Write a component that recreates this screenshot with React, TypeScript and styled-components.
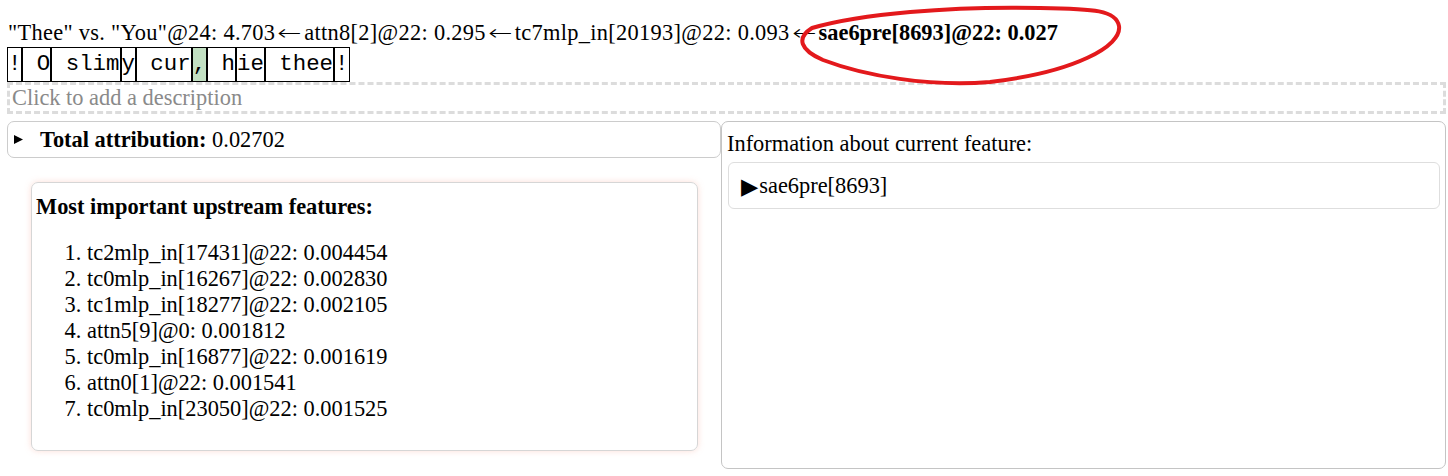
import * as React from 'react'
import styled, { createGlobalStyle } from 'styled-components'

const GlobalStyle = createGlobalStyle`
  html, body {
    margin: 0;
    padding: 0;
    background: #fff;
  }
  body {
    font-family: 'Liberation Serif', 'Times New Roman', serif;
    font-size: 22.4px;
    color: #000;
  }
`

const tokens = [
  { text: '!' },
  { text: ' O' },
  { text: ' slim' },
  { text: 'y' },
  { text: ' cur' },
  { text: ',', active: true },
  { text: ' h' },
  { text: 'ie' },
  { text: ' thee' },
  { text: '!' },
]

const upstream = [
  'tc2mlp_in[17431]@22: 0.004454',
  'tc0mlp_in[16267]@22: 0.002830',
  'tc1mlp_in[18277]@22: 0.002105',
  'attn5[9]@0: 0.001812',
  'tc0mlp_in[16877]@22: 0.001619',
  'attn0[1]@22: 0.001541',
  'tc0mlp_in[23050]@22: 0.001525',
]

export default function App() {
  return (
    <>
      <GlobalStyle />
      <Page>
        <Header>
          "Thee" vs. "You"@24: 4.703<LeftArrow>←</LeftArrow>attn8[2]@22: 0.295
          <LeftArrow>←</LeftArrow>tc7mlp_in[20193]@22: 0.093<LeftArrow>←</LeftArrow>
          <b>sae6pre[8693]@22: 0.027</b>
        </Header>
        <Tokens>
          {tokens.map((t, i) => (
            <Token key={i} active={t.active}>
              {t.text}
            </Token>
          ))}
        </Tokens>
        <Description>Click to add a description</Description>
        <Columns>
          <LeftCol>
            <TotalBox>
              <Marker viewBox="0 0 9 9">
                <polygon points="0,0 9,4.5 0,9" fill="#000" />
              </Marker>
              <span>
                <b>Total attribution:</b> 0.02702
              </span>
            </TotalBox>
            <Card>
              <CardTitle>Most important upstream features:</CardTitle>
              <List>
                {upstream.map(u => (
                  <li key={u}>{u}</li>
                ))}
              </List>
            </Card>
          </LeftCol>
          <RightPanel>
            <PanelTitle>Information about current feature:</PanelTitle>
            <FeatureBox>
              <Arrow>▶</Arrow>sae6pre[8693]
            </FeatureBox>
          </RightPanel>
        </Columns>
        <Annotation viewBox="0 0 1448 100">
          <path
            d="M 812 28 C 860 14, 950 6, 1040 8 C 1095 9, 1116 10, 1119 26 C 1122 46, 1075 72, 990 82 C 930 87, 865 76, 823 60 C 800 50, 796 38, 812 28"
            fill="none"
            stroke="#e3191c"
            strokeWidth="4"
            strokeLinecap="round"
          />
        </Annotation>
      </Page>
    </>
  )
}

const Page = styled.div`
  position: relative;
  width: 1439px;
  padding: 20px 2px 0 7px;
`

const Header = styled.div`
  line-height: 26px;
  padding-left: 1px;
  white-space: nowrap;
  letter-spacing: 0.3px;
  b {
    letter-spacing: 0;
  }
`

const LeftArrow = styled.span`
  display: inline-block;
  width: 29px;
  text-align: center;
  font-family: 'DejaVu Sans', sans-serif;
  font-size: 21.5px;
  font-weight: 200;
  letter-spacing: 0;
  transform: scaleX(1.35);
`

const Tokens = styled.div`
  display: flex;
  margin-top: 1px;
  height: 35px;
`

const Token = styled.span<{ active?: boolean }>`
  font-family: 'Liberation Mono', 'Courier New', monospace;
  font-size: 22.4px;
  white-space: pre;
  line-height: 32px;
  border: 1px solid #000;
  background: ${({ active }) => (active ? '#c2e0c2' : 'transparent')};
`

const Description = styled.div`
  border: 3px dashed #dcdcdc;
  height: 26px;
  line-height: 26px;
  padding-left: 2px;
  color: #8a8a8a;
`

const Columns = styled.div`
  display: grid;
  grid-template-columns: 714px 725px;
  margin-top: 7px;
`

const LeftCol = styled.div`
  display: flex;
  flex-direction: column;
  padding-bottom: 18px;
`

const TotalBox = styled.div`
  display: flex;
  align-items: center;
  height: 37px;
  box-sizing: border-box;
  border: 1px solid #cccccc;
  border-radius: 7px;
  padding-left: 6px;
  line-height: 26px;
`

const Marker = styled.svg`
  width: 9px;
  height: 9px;
  margin-right: 17px;
`

const Card = styled.div`
  margin: 24px 23px 0 24px;
  border: 1px solid #d6d6d6;
  border-radius: 7px;
  padding: 0 4px;
  box-shadow: 0 0 6px rgba(250, 160, 140, 0.35);
`

const CardTitle = styled.div`
  font-weight: bold;
  line-height: 26px;
  margin-top: 11px;
`

const List = styled.ol`
  margin: 20px 0 28px;
  padding-left: 51px;
  line-height: 26px;
`

const RightPanel = styled.div`
  border: 1px solid #c4c4c4;
  border-radius: 7px;
  padding: 9px 5px 0;
  display: flex;
  flex-direction: column;
`

const PanelTitle = styled.div`
  line-height: 26px;
`

const FeatureBox = styled.div`
  margin: 5px 0 0 1px;
  height: 47px;
  box-sizing: border-box;
  border: 1px solid #dedede;
  border-radius: 6px;
  padding-left: 12px;
  display: flex;
  align-items: center;
  line-height: 26px;
`

const Arrow = styled.span`
  font-family: 'DejaVu Sans', sans-serif;
  font-size: 22.4px;
  margin-right: 1px;
`

const Annotation = styled.svg`
  position: absolute;
  left: 0;
  top: 0;
  width: 1448px;
  height: 100px;
  pointer-events: none;
`
